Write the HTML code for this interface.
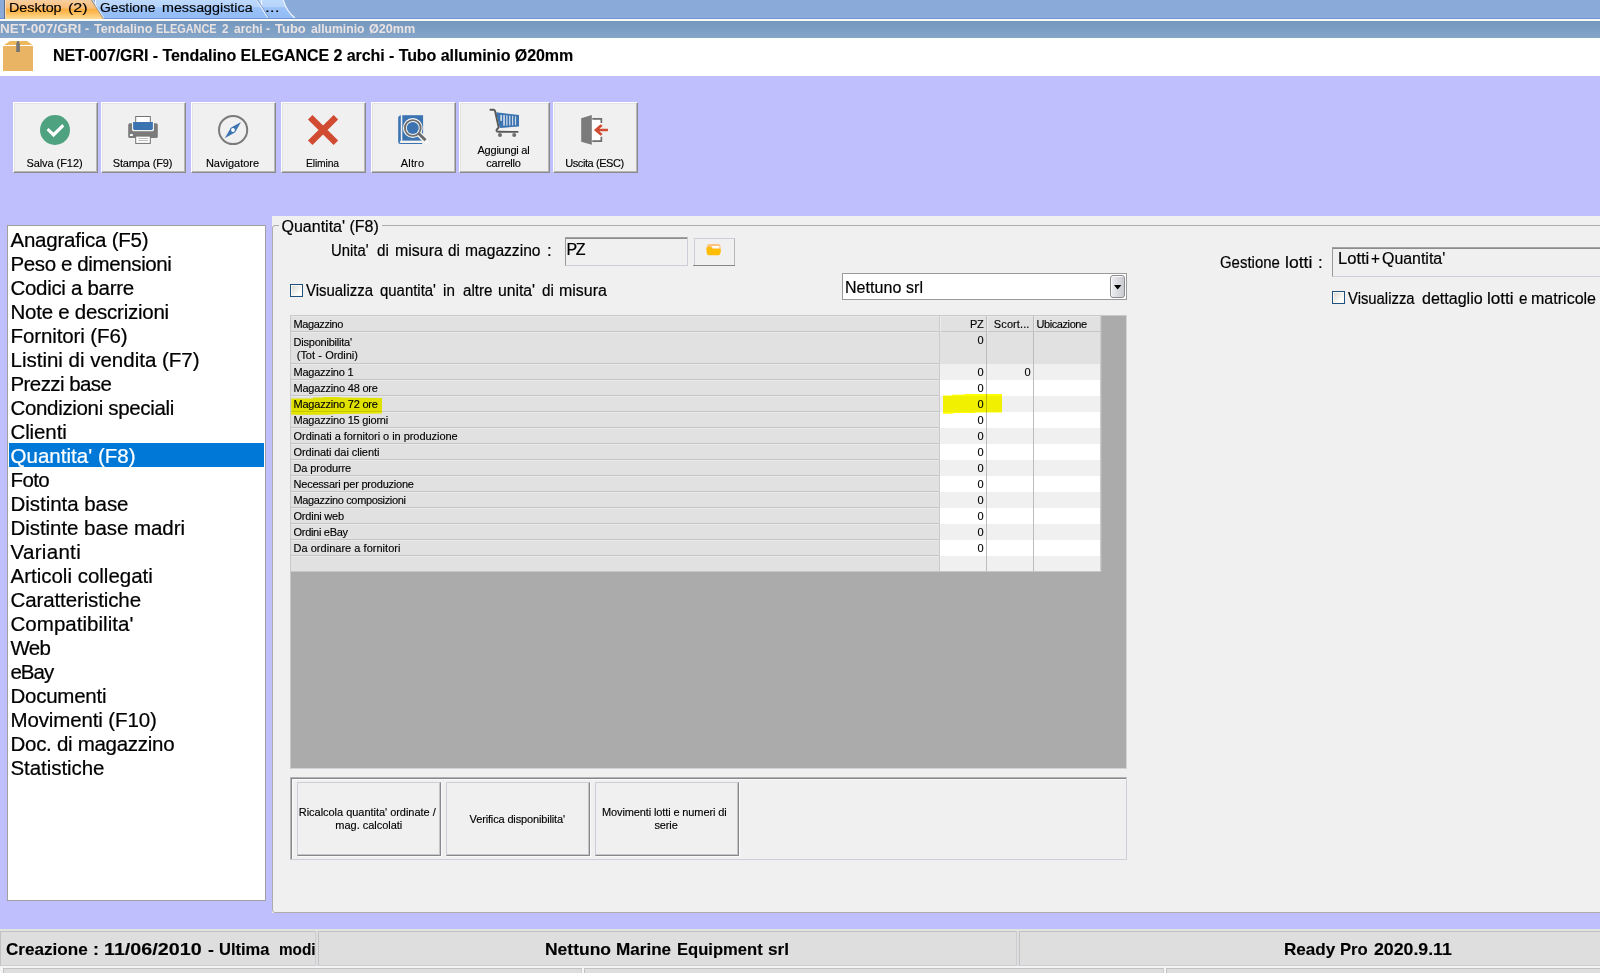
<!DOCTYPE html>
<html>
<head>
<meta charset="utf-8">
<title>Ready Pro</title>
<style>
*{box-sizing:border-box;margin:0;padding:0}
html,body{width:1600px;height:973px;overflow:hidden}
body{position:relative;background:#C0BFFD;font-family:"Liberation Sans",sans-serif;color:#000;font-size:11px;-webkit-text-stroke:0.14px #000}
.abs{position:absolute;white-space:nowrap}
#tabbar{left:0;top:0;width:1600px;height:19px;background:#8AABD9;border-bottom:1px solid #6B95D4}
#tabline{left:0;top:19px;width:1600px;height:2px;background:#FBF9F4}
#titlestrip{-webkit-text-stroke:0;left:0;top:21px;width:1600px;height:17px;background:linear-gradient(#7497BE,#85A6C9);color:#E9E2E3;font-weight:bold;font-size:12.65px;line-height:17px}
#header{left:0;top:38px;width:1600px;height:38px;background:#fff}
#hdrtext{left:53px;top:46px;font-size:16px;font-weight:bold;line-height:20px;letter-spacing:-0.06px}
.tab{position:absolute;top:0;height:18px;line-height:17px;font-size:12.5px;color:#000;transform-origin:0 0}
.tbtn{position:absolute;top:102px;height:71px;width:85px;background:#F0F0F0;border-top:1px solid #fff;border-left:1px solid #fff;border-right:1px solid #8A8A8A;border-bottom:1px solid #8A8A8A;box-shadow:inset -1px -1px 0 #B8B8B8, inset 1px 1px 0 #E4E4E4}
.tbtn .lbl{position:absolute;left:-1px;right:1px;text-align:center;font-size:11px;line-height:13px;top:54px;letter-spacing:-0.15px;white-space:nowrap}
.tbtn .lbl.two{top:41px}
#icons{left:0;top:100px}
#list{left:7px;top:225px;width:259px;height:676px;background:#fff;border:1px solid #A0A0A0}
#list div{position:absolute;left:1px;width:255px;height:24px;line-height:24px;font-size:20.5px;padding-left:1.5px;padding-top:1px;white-space:nowrap;-webkit-text-stroke:0.22px #000}
#list div.sel{background:#0078D7;color:#fff;-webkit-text-stroke:0.22px #fff}
#panel{left:272px;top:216px;width:1328px;height:697px;background:#F0F0F0}
.t16{position:absolute;font-size:16px;line-height:20px;white-space:nowrap;-webkit-text-stroke:0.2px #000}
.chk{position:absolute;width:13px;height:13px;border:1px solid #1C5180;box-shadow:inset 0 0 0 1px #FBF8F3;background:linear-gradient(135deg,#D6D6CF,#FFFFFF 80%)}
.sunk{position:absolute;border:1px solid;border-color:#A3A3A3 #CDCFD6 #CDCFD6 #9A9A9A;box-shadow:inset 0 1px 0 #8C8C8C;background:#F0F0F0}
.bbtn{position:absolute;background:#F0F0F0;border:1px solid;border-color:#CDCED6 #85878C #85878C #CDCED6;box-shadow:inset -1px -1px 0 #C6C6C6, 1px 1px 0 #FAFAFA;font-size:11px;line-height:13px;text-align:center;letter-spacing:-0.15px;white-space:nowrap}
.btn3d{position:absolute;background:#F0F0F0;border-top:1px solid #fff;border-left:1px solid #fff;border-right:1px solid #8A8A8A;border-bottom:1px solid #8A8A8A;box-shadow:inset -1px -1px 0 #B8B8B8, inset 1px 1px 0 #E4E4E4;font-size:11px;line-height:13px;text-align:center;letter-spacing:-0.15px}
#grid{left:290px;top:315px;width:837px;height:454px;background:#ABABAB;border-top:1px solid #C9C9C9;border-left:1px solid #C9C9C9;border-right:1px solid #D2D2D8;border-bottom:1px solid #D2D2D8}
.gl{position:absolute;left:1px;width:649px;background:#E1E1E1;border-bottom:1px solid #C6C6C6;border-top:1px solid #E9E9E9;font-size:11px;line-height:13px;padding-left:2.5px;padding-top:1px;letter-spacing:-0.22px;white-space:nowrap}
.gh{position:absolute;top:1px;height:16px;background:#E1E1E1;border-bottom:1px solid #C6C6C6;border-top:1px solid #E9E9E9;border-left:1px solid #ECECEC;font-size:11px;line-height:13px;padding-top:1px;letter-spacing:-0.22px;white-space:nowrap}
.gc{position:absolute;font-size:11px;line-height:16px;text-align:right;white-space:nowrap}
.vline{position:absolute;width:1px;background:#BCBCC0}
#status{left:0;top:929px;width:1600px;height:44px;background:#DEDEDE;border-top:2px solid #E2E2E1}
.sp{position:absolute;background:#DEDEDE;border:1px solid;border-color:#C2C2C2 #CDCDD4 #CDCDD4 #C2C2C2;overflow:hidden;font-weight:bold;font-size:17px;line-height:35px;white-space:nowrap}
</style>
</head>
<body>
<div id="tabbar" class="abs"></div>
<svg class="abs" style="left:0;top:0" width="320" height="19" viewBox="0 0 320 19">
<defs>
<linearGradient id="gb" x1="0" y1="0" x2="0" y2="1"><stop offset="0" stop-color="#BDD9FD"/><stop offset="0.37" stop-color="#B6D3FB"/><stop offset="0.40" stop-color="#9BC3F9"/><stop offset="1" stop-color="#93BBF5"/></linearGradient>
<linearGradient id="go" x1="0" y1="0" x2="0" y2="1"><stop offset="0" stop-color="#F6CFA0"/><stop offset="0.42" stop-color="#F9BE78"/><stop offset="0.5" stop-color="#FAAE42"/><stop offset="0.7" stop-color="#FDBE5C"/><stop offset="1" stop-color="#FFDC98"/></linearGradient>
</defs>
<path d="M258,0 L283,0 Q286,11 295,18 L295,19 L258,19 Z" fill="url(#gb)"/>
<path d="M283.3,0 Q286.3,11 295,18" stroke="#F4F8FE" stroke-width="1.1" fill="none"/>

<path d="M261.5,0 L261.5,5 Q262,9 267,19" stroke="#F4F8FE" stroke-width="1" fill="none"/>
<path d="M95,0 L256,0 L268,19 L95,19 Z" fill="url(#gb)"/>
<path d="M95.5,0 L95.5,6" stroke="#F4F8FE" stroke-width="1" fill="none"/>
<path d="M256.5,0 L268.5,19" stroke="#F4F8FE" stroke-width="1" fill="none"/>
<path d="M257.7,0 L269.7,19" stroke="#7F9FCE" stroke-width="1" fill="none"/>
<path d="M5,0 L91,0 L103,19 L5,19 Z" fill="url(#go)"/>
<path d="M91.5,0 L103.5,19" stroke="#A88E66" stroke-width="1" fill="none"/>
<path d="M92.6,0 L104.6,19" stroke="#DCE9FB" stroke-width="1" fill="none"/>
<path d="M4.5,0 L4.5,19" stroke="#5C6F8E" stroke-width="1" fill="none"/>
<path d="M5.5,0 L5.5,19" stroke="#F9DDB8" stroke-width="1" fill="none"/>
<rect x="104" y="18" width="216" height="1" fill="#6B95D4"/>
</svg>
<div class="tab" style="left:9.15px;transform:scaleX(1.147)">Desktop</div>
<div class="tab" style="left:68.4px;transform:scaleX(1.29)">(2)</div>
<div class="tab" style="left:100.3px;transform:scaleX(1.106)">Gestione</div>
<div class="tab" style="left:161.61px;transform:scaleX(1.144)">messaggistica</div>
<div class="tab" style="left:265.48px;transform:scaleX(1.4)">...</div>
<div id="tabline" class="abs"></div>
<div id="titlestrip" class="abs"><span style="position:absolute;left:-0.27px;top:0;transform:scaleX(1.07);transform-origin:0 0">NET-007/GRI</span><span style="position:absolute;left:85.3px;top:0;transform:scaleX(0.975);transform-origin:0 0">-</span><span style="position:absolute;left:94.0px;top:0;transform:scaleX(0.995);transform-origin:0 0">Tendalino</span><span style="position:absolute;left:156.14px;top:0;transform:scaleX(0.862);transform-origin:0 0">ELEGANCE</span><span style="position:absolute;left:221.8px;top:0;transform:scaleX(0.929);transform-origin:0 0">2</span><span style="position:absolute;left:233.6px;top:0;transform:scaleX(0.947);transform-origin:0 0">archi</span><span style="position:absolute;left:266.4px;top:0;transform:scaleX(0.975);transform-origin:0 0">-</span><span style="position:absolute;left:275.0px;top:0;transform:scaleX(1.027);transform-origin:0 0">Tubo</span><span style="position:absolute;left:310.5px;top:0;transform:scaleX(0.964);transform-origin:0 0">alluminio</span><span style="position:absolute;left:368.8px;top:0;transform:scaleX(0.998);transform-origin:0 0">Ø20mm</span></div>
<div id="header" class="abs"></div>
<svg class="abs" style="left:0;top:38px" width="40" height="38" viewBox="0 38 40 38">
<path d="M10,41 L27,41 L32.5,45 L4,45 Z" fill="#EDB95F"/>
<rect x="3" y="46" width="30" height="25" fill="#E9B564"/>
<path d="M17.2,41 L18.8,41 L19.9,44 L19.9,52 L16.2,52 L16.2,44 Z" fill="#767676"/>
</svg>
<div id="hdrtext" class="abs">NET-007/GRI - Tendalino ELEGANCE 2 archi - Tubo alluminio Ø20mm</div>
<div class="tbtn" style="left:13px;width:85px"><div class="lbl" style="letter-spacing:-0.06px">Salva (F12)</div></div>
<div class="tbtn" style="left:101px;width:85px"><div class="lbl" style="letter-spacing:-0.15px">Stampa (F9)</div></div>
<div class="tbtn" style="left:191px;width:85px"><div class="lbl" style="letter-spacing:0px">Navigatore</div></div>
<div class="tbtn" style="left:281px;width:85px"><div class="lbl" style="letter-spacing:-0.15px;transform:scaleX(0.94);left:-1.3px;right:1.3px">Elimina</div></div>
<div class="tbtn" style="left:371px;width:85px"><div class="lbl" style="letter-spacing:0.15px">Altro</div></div>
<div class="tbtn" style="left:459px;width:91px"><div class="lbl two" style="letter-spacing:-0.22px">Aggiungi al<br>carrello</div></div>
<div class="tbtn" style="left:553px;width:85px"><div class="lbl" style="letter-spacing:-0.41px">Uscita (ESC)</div></div>
<svg class="abs" style="left:0;top:100px" width="660" height="60" viewBox="0 100 660 60">
<!-- salva -->
<circle cx="55" cy="130" r="15" fill="#4FA27F"/>
<path d="M48.5,128 L46.6,130.3 L53.5,137.3 L64.3,126.5 L62.3,124.1 L53.5,132.5 Z" fill="#fff"/>
<!-- stampa -->
<rect x="128.2" y="123.2" width="29.6" height="14.9" rx="1.7" fill="#7B7B7B"/>
<rect x="135.7" y="116.5" width="14.6" height="8" fill="#fff" stroke="#727272" stroke-width="1"/>
<path d="M132,122 L154,122 L154,129.4 Q154,131.3 152.1,131.3 L133.9,131.3 Q132,131.3 132,129.4 Z" fill="#F0F0F0"/>
<path d="M133.1,122 L152.9,122 L152.9,129 L151.8,130.1 L134.2,130.1 L133.1,129 Z" fill="#3C74B1"/>
<rect x="130" y="134" width="2.8" height="2.1" rx="0.5" fill="#fff"/>
<rect x="135.7" y="136.1" width="14.6" height="7.3" fill="#fff" stroke="#727272" stroke-width="1"/>
<rect x="138.2" y="138.1" width="9.7" height="0.9" fill="#B4B4B4"/>
<rect x="138.2" y="140.1" width="9.7" height="0.9" fill="#B4B4B4"/>
<!-- navigatore -->
<circle cx="233.1" cy="130" r="14.1" fill="none" stroke="#7B7B7B" stroke-width="2"/>
<path d="M241,122 L235.2,132.2 L224.8,138.2 L230.8,127.8 Z" fill="#3C74B1"/>
<circle cx="233" cy="130" r="1.9" fill="#fff"/>
<!-- elimina -->
<path d="M310.2,117.2 L335.9,142.8 M335.9,117.2 L310.2,142.8" stroke="#D04B31" stroke-width="6.4" stroke-linecap="butt" fill="none"/>
<!-- altro -->
<path d="M398.2,117 L400.2,115.2 L400.8,115.2 L400.8,141.2 Q399.7,141.4 399.7,142.2 Q399.7,142.9 400.8,142.9 L422.2,142.9 L422.2,143.9 L400.2,143.9 Q398.2,143.9 398.2,141.9 Z" fill="#3C74B1"/>
<rect x="402.3" y="115.2" width="20.8" height="25.5" fill="#3C74B1"/>
<rect x="400.2" y="140.9" width="22" height="1.9" fill="#F6F3EF"/>
<path d="M418.4,133.2 L425.8,140.7" stroke="#F6F6F6" stroke-width="5.6" stroke-linecap="round"/>
<circle cx="412.8" cy="128" r="9.9" fill="#F6F6F6"/>
<path d="M418.2,133 L425.5,140.3" stroke="#6A6A6A" stroke-width="3" stroke-linecap="butt"/>
<circle cx="412.8" cy="128" r="7.9" fill="#F6F6F6" stroke="#6E6E6E" stroke-width="1.9"/>
<circle cx="412.8" cy="128" r="6" fill="#3C74B1"/>
<!-- carrello -->
<path d="M496.1,112.3 L519,115.1 L519,126.5 L499.8,127.9 Z" fill="#3C74B1"/>
<path d="M490.4,109.7 L493.6,109.8 Q494.8,110 495.1,111.2 L498.5,126.6 Q498.7,127.8 497.8,128.6 Q496.3,129.8 496.5,130.8 Q496.8,131.8 498.2,131.8 L517.6,131.9" fill="none" stroke="#575757" stroke-width="1.9" stroke-linecap="round" stroke-linejoin="round"/>
<g fill="#C9D7E9">
<rect x="500.3" y="114.9" width="1.7" height="6"/><rect x="503.2" y="115.1" width="1.7" height="10.5"/><rect x="506.2" y="115.3" width="1.3" height="10.3"/><rect x="509.1" y="115.6" width="1.3" height="9.9"/><rect x="512" y="115.9" width="1.2" height="9.5"/><rect x="514.9" y="116.3" width="1.2" height="8.8"/>
</g>
<circle cx="500" cy="134.9" r="2" fill="#6E6E6E"/>
<circle cx="514.2" cy="134.9" r="2" fill="#6E6E6E"/>
<!-- uscita -->
<rect x="592" y="118.8" width="9.4" height="22.3" fill="#fff"/>
<path d="M592.3,118.85 L601.35,118.85 L601.35,123 M601.35,136.7 L601.35,141.05 L592.3,141.05" fill="none" stroke="#6E6E6E" stroke-width="1.7"/>
<path d="M581.2,118.2 L591.8,115.1 L591.8,144.8 L581.2,141.7 Z" fill="#7B7B7B"/>
<path d="M593.9,130 L600.6,124.2 L602.6,125.9 L599.5,128.7 L607.9,128.7 L607.9,131.3 L599.5,131.3 L602.6,134.1 L600.6,135.8 Z" fill="#D04B31"/>
</svg>
<div id="list" class="abs">
<div style="top:1px;letter-spacing:-0.229px">Anagrafica (F5)</div>
<div style="top:25px;letter-spacing:-0.381px">Peso e dimensioni</div>
<div style="top:49px;letter-spacing:-0.308px">Codici a barre</div>
<div style="top:73px;letter-spacing:-0.253px">Note e descrizioni</div>
<div style="top:97px;letter-spacing:-0.108px">Fornitori (F6)</div>
<div style="top:121px;letter-spacing:-0.004px">Listini di vendita (F7)</div>
<div style="top:145px;letter-spacing:-0.57px">Prezzi base</div>
<div style="top:169px;letter-spacing:-0.333px">Condizioni speciali</div>
<div style="top:193px;letter-spacing:-0.117px">Clienti</div>
<div class="sel" style="top:217px;letter-spacing:0.031px">Quantita' (F8)</div>
<div style="top:241px;letter-spacing:-0.633px">Foto</div>
<div style="top:265px;letter-spacing:-0.041px">Distinta base</div>
<div style="top:289px;letter-spacing:-0.055px">Distinte base madri</div>
<div style="top:313px;letter-spacing:0.314px">Varianti</div>
<div style="top:337px;letter-spacing:-0.006px">Articoli collegati</div>
<div style="top:361px;letter-spacing:-0.114px">Caratteristiche</div>
<div style="top:385px;letter-spacing:0.031px">Compatibilita'</div>
<div style="top:409px;letter-spacing:-0.75px">Web</div>
<div style="top:433px;letter-spacing:-1.033px">eBay</div>
<div style="top:457px;letter-spacing:-0.25px">Documenti</div>
<div style="top:481px;letter-spacing:-0.129px">Movimenti (F10)</div>
<div style="top:505px;letter-spacing:-0.287px">Doc. di magazzino</div>
<div style="top:529px;letter-spacing:-0.06px">Statistiche</div>
</div>
<div id="panel" class="abs">
<div style="position:absolute;left:0px;top:9px;width:1340px;height:688px;border:1px solid #ADADAD;border-radius:3px"></div>
<div class="t16" style="left:7px;top:0px;background:#F0F0F0;padding:0 3px 0 2.5px;height:20px;line-height:20px;top:1px">Quantita' (F8)</div>
<span class="t16" style="left:59.47px;top:25px;transform:scaleX(0.928);transform-origin:0 0">Unita&#39;</span><span class="t16" style="left:105.1px;top:25px;transform:scaleX(0.95);transform-origin:0 0">di</span><span class="t16" style="left:122.6px;top:25px;transform:scaleX(0.996);transform-origin:0 0">misura</span><span class="t16" style="left:176.0px;top:25px;transform:scaleX(0.95);transform-origin:0 0">di</span><span class="t16" style="left:193.42px;top:25px;transform:scaleX(0.976);transform-origin:0 0">magazzino</span><span class="t16" style="left:274.9px;top:25px;transform:scaleX(1.05);transform-origin:0 0">:</span>
<div class="sunk" style="left:293px;top:21px;width:123px;height:29px"><div class="t16" style="left:0.5px;top:1.5px;letter-spacing:-1.5px">PZ</div></div>
<div style="position:absolute;left:422px;top:22px;width:41px;height:28px;background:#F0F0F0;border:1px solid;border-color:#CDCED6 #B8B8BC #85878C #CDCED6"></div><div style="position:absolute;left:421px;top:48.60000000000002px;width:42px;height:1.5px;background:#85878C"></div>
<svg style="position:absolute;left:432px;top:27px" width="20" height="14" viewBox="704 243 20 14">
<path d="M707,246.2 Q707,244 709.2,244 L718.4,244 Q720.5,244 720.5,246.2 L720.5,250 L707,250 Z" fill="#FFC47C"/>
<path d="M711.8,245.9 L719.3,245.9 L719.3,248.6 L712.8,248.6 Z" fill="#FFFDF6"/>
<path d="M706.3,248.4 Q706.3,247 707.7,247 L710.2,247 Q711,247 711.6,247.8 L712.3,248.7 L719.6,248.7 Q721,248.7 720.9,250 L720.4,253.4 Q720,255.2 718.2,255.2 L709,255.2 Q707.2,255.2 706.8,253.4 Z" fill="#FDBC05"/>
</svg>
<div class="chk" style="left:18px;top:68px"></div>
<span class="t16" style="left:34.4px;top:65.30000000000001px;transform:scaleX(0.933);transform-origin:0 0">Visualizza</span><span class="t16" style="left:107.6px;top:65.30000000000001px;transform:scaleX(0.933);transform-origin:0 0">quantita&#39;</span><span class="t16" style="left:170.52px;top:65.30000000000001px;transform:scaleX(0.95);transform-origin:0 0">in</span><span class="t16" style="left:191.0px;top:65.30000000000001px;transform:scaleX(0.948);transform-origin:0 0">altre</span><span class="t16" style="left:225.62px;top:65.30000000000001px;transform:scaleX(0.983);transform-origin:0 0">unita&#39;</span><span class="t16" style="left:269.5px;top:65.30000000000001px;transform:scaleX(0.95);transform-origin:0 0">di</span><span class="t16" style="left:286.6px;top:65.30000000000001px;transform:scaleX(0.996);transform-origin:0 0">misura</span>
<div style="position:absolute;left:570px;top:57px;width:285px;height:27px;background:#fff;border:1px solid #9A9A9A"><div class="t16" style="left:2px;top:3.7px;letter-spacing:0.06px">Nettuno srl</div><div style="position:absolute;left:267px;top:1px;width:15px;height:23px;border:1px solid #8A8C90;border-radius:3px;background:linear-gradient(90deg,#EEEEF1,#CACBD0);box-shadow:inset 1px 1px 0 #FAFAFA"></div><svg style="position:absolute;left:270.8px;top:11px" width="8" height="5" viewBox="0 0 8 5"><path d="M0,0 L7.4,0 L3.7,4.6 Z" fill="#000"/></svg></div>
<span class="t16" style="left:947.75px;top:37px;transform:scaleX(0.934);transform-origin:0 0">Gestione</span><span class="t16" style="left:1012.9px;top:37px;transform:scaleX(1.096);transform-origin:0 0">lotti</span><span class="t16" style="left:1045.95px;top:37px;transform:scaleX(1.05);transform-origin:0 0">:</span>
<div class="sunk" style="left:1060px;top:31px;width:300px;height:30px"><span class="t16" style="left:5.17px;top:1px;transform:scaleX(1.034);transform-origin:0 0">Lotti</span><span class="t16" style="left:37.88px;top:1px;transform:scaleX(0.95);transform-origin:0 0">+</span><span class="t16" style="left:48.8px;top:1px;transform:scaleX(0.995);transform-origin:0 0">Quantita&#39;</span></div>
<div class="chk" style="left:1060px;top:75px"></div>
<span class="t16" style="left:1076.4px;top:72.5px;transform:scaleX(0.928);transform-origin:0 0">Visualizza</span><span class="t16" style="left:1149.6px;top:72.5px;transform:scaleX(1.003);transform-origin:0 0">dettaglio</span><span class="t16" style="left:1215.33px;top:72.5px;transform:scaleX(1.07);transform-origin:0 0">lotti</span><span class="t16" style="left:1246.77px;top:72.5px;transform:scaleX(0.95);transform-origin:0 0">e</span><span class="t16" style="left:1259.2px;top:72.5px;transform:scaleX(1.002);transform-origin:0 0">matricole</span>
<div id="grid" style="position:absolute;left:18px;top:99px">
<div class="gl" style="left:0px;top:0px;height:16px;letter-spacing:-0.42px">Magazzino</div>
<div class="gl" style="left:0px;top:16px;height:32px;padding-top:2.5px">Disponibilita'<br><span style="letter-spacing:-0.05px;word-spacing:0.3px">&nbsp;(Tot - Ordini)</span></div>
<div class="gl" style="left:0px;top:48px;height:16px;letter-spacing:-0.23px">Magazzino 1</div>
<div class="gl" style="left:0px;top:64px;height:16px;letter-spacing:-0.203px">Magazzino 48 ore</div>
<div class="gl" style="left:0px;top:80px;height:16px;letter-spacing:-0.203px">Magazzino 72 ore</div>
<div class="gl" style="left:0px;top:96px;height:16px;letter-spacing:-0.209px">Magazzino 15 giorni</div>
<div class="gl" style="left:0px;top:112px;height:16px;letter-spacing:-0.043px">Ordinati a fornitori o in produzione</div>
<div class="gl" style="left:0px;top:128px;height:16px;letter-spacing:-0.083px">Ordinati dai clienti</div>
<div class="gl" style="left:0px;top:144px;height:16px;letter-spacing:-0.1px">Da produrre</div>
<div class="gl" style="left:0px;top:160px;height:16px;letter-spacing:-0.211px">Necessari per produzione</div>
<div class="gl" style="left:0px;top:176px;height:16px;letter-spacing:-0.353px">Magazzino composizioni</div>
<div class="gl" style="left:0px;top:192px;height:16px;letter-spacing:-0.22px">Ordini web</div>
<div class="gl" style="left:0px;top:208px;height:16px;letter-spacing:-0.29px">Ordini eBay</div>
<div class="gl" style="left:0px;top:224px;height:16px;letter-spacing:0.025px">Da ordinare a fornitori</div>
<div class="gl" style="left:0px;top:240px;height:16px;letter-spacing:-0.22px"></div>
<div class="gh" style="left:649px;top:0px;width:46px;text-align:right;padding-right:2.5px">PZ</div>
<div class="gh" style="left:696px;top:0px;width:46px;text-align:right;padding-right:3.5px;letter-spacing:0.1px">Scort...</div>
<div class="gh" style="left:743px;top:0px;width:67px;padding-left:1.5px;letter-spacing:-0.42px">Ubicazione</div>
<div style="position:absolute;left:649px;top:16px;width:161px;height:32px;background:#E1E1E1"></div>
<div style="position:absolute;left:649px;top:48px;width:161px;height:16px;background:#F0F0F0"></div>
<div style="position:absolute;left:649px;top:64px;width:161px;height:16px;background:#FFFFFF"></div>
<div style="position:absolute;left:649px;top:80px;width:161px;height:16px;background:#F0F0F0"></div>
<div style="position:absolute;left:649px;top:96px;width:161px;height:16px;background:#FFFFFF"></div>
<div style="position:absolute;left:649px;top:112px;width:161px;height:16px;background:#F0F0F0"></div>
<div style="position:absolute;left:649px;top:128px;width:161px;height:16px;background:#FFFFFF"></div>
<div style="position:absolute;left:649px;top:144px;width:161px;height:16px;background:#F0F0F0"></div>
<div style="position:absolute;left:649px;top:160px;width:161px;height:16px;background:#FFFFFF"></div>
<div style="position:absolute;left:649px;top:176px;width:161px;height:16px;background:#F0F0F0"></div>
<div style="position:absolute;left:649px;top:192px;width:161px;height:16px;background:#FFFFFF"></div>
<div style="position:absolute;left:649px;top:208px;width:161px;height:16px;background:#F0F0F0"></div>
<div style="position:absolute;left:649px;top:224px;width:161px;height:16px;background:#FFFFFF"></div>
<div style="position:absolute;left:649px;top:240px;width:161px;height:16px;background:#F0F0F0"></div>
<div class="vline" style="left:695px;top:0px;height:256px"></div>
<div class="vline" style="left:742px;top:0px;height:256px"></div>
<div class="vline" style="left:648px;top:0px;height:256px;background:#CBCBD0"></div>
<div class="vline" style="left:809px;top:0px;height:256px;background:#CBCBCB"></div>
<div class="vline" style="left:810px;top:0px;height:256px;background:#B5B5B5"></div>
<div style="position:absolute;left:0px;top:255px;width:810px;height:1px;background:#C6C6C6"></div>
<svg style="position:absolute;left:0;top:0;mix-blend-mode:multiply" width="720" height="110" viewBox="291 316 720 110"><path d="M291.25,398.6 L313,398.6 L313,397.6 L322.75,397.5 L322.75,397.1 L340,397.1 L340,397.5 L382,397.9 L382,413.6 L334.75,414 L326.9,414.75 L291.25,414.75 Z" fill="#FFFF00"/><path d="M943,395.5 L952,395.5 L952,394.7 L965,394.5 L965,394 L1002,394 L1002,412.4 L975,412.4 L975,413 L953,413 L953,413.7 L943,413.7 Z" fill="#FFFF00"/></svg>
<div class="gc" style="left:649px;top:16px;width:43.6px">0</div>
<div class="gc" style="left:649px;top:48px;width:43.6px">0</div>
<div class="gc" style="left:649px;top:64px;width:43.6px">0</div>
<div class="gc" style="left:649px;top:80px;width:43.6px">0</div>
<div class="gc" style="left:649px;top:96px;width:43.6px">0</div>
<div class="gc" style="left:649px;top:112px;width:43.6px">0</div>
<div class="gc" style="left:649px;top:128px;width:43.6px">0</div>
<div class="gc" style="left:649px;top:144px;width:43.6px">0</div>
<div class="gc" style="left:649px;top:160px;width:43.6px">0</div>
<div class="gc" style="left:649px;top:176px;width:43.6px">0</div>
<div class="gc" style="left:649px;top:192px;width:43.6px">0</div>
<div class="gc" style="left:649px;top:208px;width:43.6px">0</div>
<div class="gc" style="left:649px;top:224px;width:43.6px">0</div>
<div class="gc" style="left:696px;top:48px;width:43.6px">0</div>
</div>
<div style="position:absolute;left:18px;top:561px;width:837px;height:83px;border:1px solid;border-color:#B4B4B4 #CDCFD6 #CDCFD6 #B4B4B4;box-shadow:inset 1px 1px 0 #85878C, inset 2px 2px 0 #FAFAFA"></div>
<div class="bbtn" style="left:25px;top:566px;width:144px;height:74px"><div style="position:absolute;left:-3.5px;right:0;top:22.5px;letter-spacing:-0.03px">Ricalcola quantita' ordinate /<br><span style="position:relative;left:1.5px">mag. calcolati</span></div></div>
<div class="bbtn" style="left:174px;top:566px;width:144px;height:74px"><div style="position:absolute;left:-1.5px;right:0;top:29.5px">Verifica disponibilita'</div></div>
<div class="bbtn" style="left:323px;top:566px;width:144px;height:74px"><div style="position:absolute;left:-5.5px;right:0;top:22.5px;letter-spacing:-0.12px">Movimenti lotti e numeri di<br><span style="position:relative;left:1.8px">serie</span></div></div>
</div>
<div id="status" class="abs">
<div style="position:absolute;left:0;top:35px;width:1600px;height:8px;background:#F4F4F4"></div>
<div class="sp" style="left:0;top:0;width:316px;height:35px"><span style="position:absolute;left:5.2px;top:0;transform:scaleX(1.006);transform-origin:0 0">Creazione</span><span style="position:absolute;left:92.33px;top:0;transform:scaleX(1.05);transform-origin:0 0">:</span><span style="position:absolute;left:102.64px;top:0;transform:scaleX(1.16);transform-origin:0 0">11/06/2010</span><span style="position:absolute;left:207.3px;top:0;transform:scaleX(1.04);transform-origin:0 0">-</span><span style="position:absolute;left:217.73px;top:0;transform:scaleX(0.971);transform-origin:0 0">Ultima</span><span style="position:absolute;left:277.6px;transform:scaleX(0.9);transform-origin:0 0">modifica</span></div>
<div class="sp" style="left:318px;top:0;width:699px;height:35px"><span style="position:absolute;left:225.72px;top:0;transform:scaleX(1.028);transform-origin:0 0">Nettuno</span><span style="position:absolute;left:296.59px;top:0;transform:scaleX(1.006);transform-origin:0 0">Marine</span><span style="position:absolute;left:357.92px;top:0;transform:scaleX(0.976);transform-origin:0 0">Equipment</span><span style="position:absolute;left:448.89px;top:0;transform:scaleX(1.011);transform-origin:0 0">srl</span></div>
<div class="sp" style="left:1019px;top:0;width:700px;height:35px"><span style="position:absolute;left:263.74px;top:0;transform:scaleX(1.005);transform-origin:0 0">Ready</span><span style="position:absolute;left:320.02px;top:0;transform:scaleX(0.981);transform-origin:0 0">Pro</span><span style="position:absolute;left:353.75px;top:0;transform:scaleX(1.042);transform-origin:0 0">2020.9.11</span></div>
<div class="sp" style="left:3px;top:37px;width:579px;height:20px"></div>
<div class="sp" style="left:584px;top:37px;width:580px;height:20px"></div>
<div class="sp" style="left:1166px;top:37px;width:500px;height:20px"></div>
</div>
</body>
</html>
